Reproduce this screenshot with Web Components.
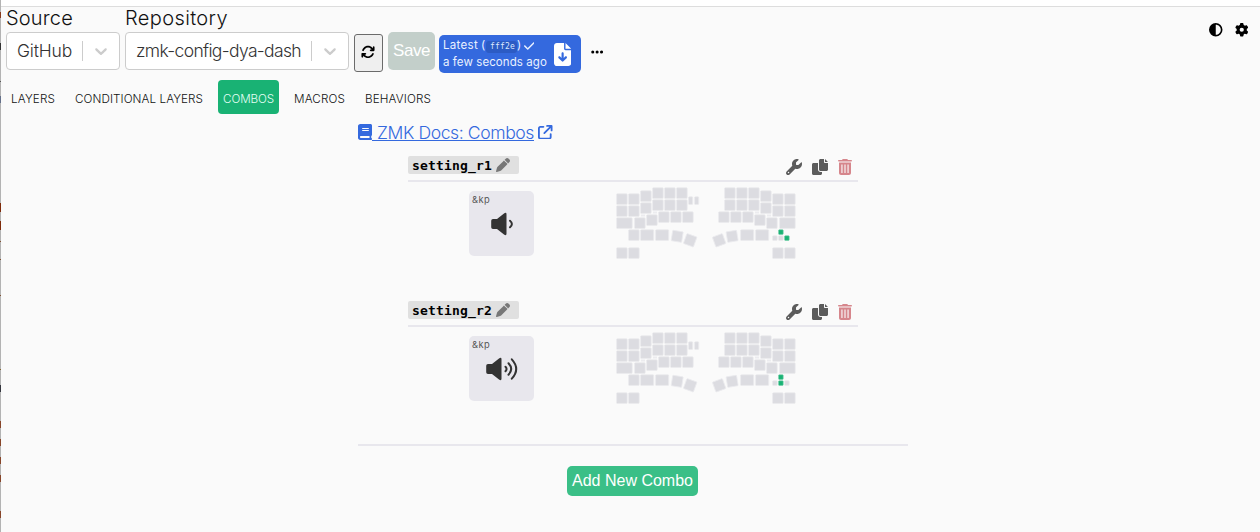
<!DOCTYPE html>
<html lang="en"><head><meta charset="utf-8"><title>Keymap Editor</title>
<style>
html,body{margin:0;height:100%;background:#fafafa}
body{font-family:Inter,"Liberation Sans",sans-serif;font-weight:300;overflow:hidden}
</style></head><body><keymap-app></keymap-app>
<script>
const ICONS={
rotate:[512,'M105.1 202.6c7.7-21.8 20.2-42.3 37.8-59.8c62.5-62.5 163.8-62.5 226.3 0L386.3 160H352c-17.7 0-32 14.3-32 32s14.3 32 32 32H463.9c17.7 0 32-14.3 32-32V80c0-17.7-14.3-32-32-32s-32 14.3-32 32v35.2L414.4 97.6c-87.5-87.5-229.3-87.5-316.8 0C73.2 122 55.6 150.7 44.8 181.4c-5.9 16.7 2.9 34.9 19.5 40.8s34.9-2.9 40.8-19.5zM39 289.3c-5 1.5-9.8 4.2-13.7 8.2c-4 4-6.7 8.8-8.1 14c-.3 1.2-.6 2.5-.8 3.8c-.3 1.7-.4 3.4-.4 5.1V432c0 17.7 14.3 32 32 32s32-14.3 32-32V396.9l17.6 17.5c87.5 87.4 229.3 87.4 316.7 0c24.4-24.4 42.1-53.1 52.9-83.7c5.9-16.7-2.9-34.9-19.5-40.8s-34.9 2.9-40.8 19.5c-7.7 21.8-20.2 42.3-37.8 59.8c-62.5 62.5-163.8 62.5-226.3 0l-.1-.1L125.6 352H160c17.7 0 32-14.3 32-32s-14.3-32-32-32H48.4c-1.6 0-3.2 .1-4.8 .3s-3.1 .5-4.6 1z'],
check:[448,'M438.6 105.4c12.5 12.5 12.5 32.8 0 45.3l-256 256c-12.5 12.5-32.8 12.5-45.3 0l-128-128c-12.5-12.5-12.5-32.8 0-45.3s32.8-12.5 45.3 0L160 338.7 393.4 105.4c12.5-12.5 32.8-12.5 45.3 0z'],
file:[384,'M64 0C28.7 0 0 28.7 0 64V448c0 35.3 28.7 64 64 64H320c35.3 0 64-28.7 64-64V160H256c-17.7 0-32-14.3-32-32V0H64zM256 0V128H384L256 0zM216 232V334.1l31-31c9.4-9.4 24.6-9.4 33.9 0s9.4 24.6 0 33.9l-72 72c-9.4 9.4-24.6 9.4-33.9 0l-72-72c-9.4-9.4-9.4-24.6 0-33.9s24.6-9.4 33.9 0l31 31V232c0-13.3 10.7-24 24-24s24 10.7 24 24z'],
contrast:[512,'M448 256c0-106-86-192-192-192V448c106 0 192-86 192-192zM0 256a256 256 0 1 1 512 0A256 256 0 1 1 0 256z'],
gear:[512,'M495.9 166.6c3.2 8.7 .5 18.4-6.4 24.6l-43.3 39.4c1.1 8.3 1.7 16.8 1.7 25.4s-.6 17.1-1.7 25.4l43.3 39.4c6.9 6.2 9.6 15.9 6.4 24.6c-4.4 11.9-9.7 23.3-15.8 34.3l-4.7 8.1c-6.6 11-14 21.4-22.1 31.2c-5.9 7.2-15.7 9.6-24.5 6.8l-55.7-17.7c-13.4 10.3-28.2 18.9-44 25.4l-12.5 57.1c-2 9.1-9 16.3-18.2 17.8c-13.8 2.3-28 3.5-42.5 3.5s-28.7-1.2-42.5-3.5c-9.2-1.5-16.2-8.7-18.2-17.8l-12.5-57.1c-15.8-6.5-30.6-15.1-44-25.4L83.1 425.9c-8.8 2.8-18.6 .3-24.5-6.8c-8.1-9.8-15.5-20.2-22.1-31.2l-4.7-8.1c-6.1-11-11.4-22.4-15.8-34.3c-3.2-8.7-.5-18.4 6.4-24.6l43.3-39.4C64.6 273.1 64 264.6 64 256s.6-17.1 1.7-25.4L22.4 191.2c-6.9-6.2-9.6-15.9-6.4-24.6c4.4-11.9 9.7-23.3 15.8-34.3l4.7-8.1c6.6-11 14-21.4 22.1-31.2c5.9-7.2 15.7-9.6 24.5-6.8l55.7 17.7c13.4-10.3 28.2-18.9 44-25.4l12.5-57.1c2-9.1 9-16.3 18.2-17.8C227.3 1.2 241.5 0 256 0s28.7 1.2 42.5 3.5c9.2 1.5 16.2 8.7 18.2 17.8l12.5 57.1c15.8 6.5 30.6 15.1 44 25.4l55.7-17.7c8.8-2.8 18.6-.3 24.5 6.8c8.1 9.8 15.5 20.2 22.1 31.2l4.7 8.1c6.1 11 11.4 22.4 15.8 34.3zM256 336a80 80 0 1 0 0-160 80 80 0 1 0 0 160z'],
book:[448,'M72 0H400C427 0 448 21 448 48V352C448 367 438 379 424 383V448C438 448 448 464 448 480S438 512 416 512H72C32 512 0 480 0 440V72C0 32 32 0 72 0zM96 384C78 384 64 398 64 416S78 448 96 448H368V384zM144 128C135 128 128 135 128 144S135 160 144 160H336C345 160 352 153 352 144S345 128 336 128zM144 192C135 192 128 199 128 208S135 224 144 224H336C345 224 352 217 352 208S345 192 336 192z'],
external:[512,'M320 0c-17.7 0-32 14.3-32 32s14.3 32 32 32h82.7L201.4 265.4c-12.5 12.5-12.5 32.8 0 45.3s32.8 12.5 45.3 0L448 109.3V192c0 17.7 14.3 32 32 32s32-14.3 32-32V32c0-17.7-14.3-32-32-32H320zM80 32C35.8 32 0 67.8 0 112V432c0 44.2 35.8 80 80 80H400c44.2 0 80-35.8 80-80V320c0-17.7-14.3-32-32-32s-32 14.3-32 32V432c0 8.8-7.2 16-16 16H80c-8.8 0-16-7.2-16-16V112c0-8.8 7.2-16 16-16H192c17.7 0 32-14.3 32-32s-14.3-32-32-32H80z'],
pencil:[512,'M410.3 231l11.3-11.3-33.9-33.9-62.1-62.1L291.7 89.8l-11.3 11.3-22.6 22.6L58.6 322.9c-10.4 10.4-18 23.3-22.2 37.4L1 480.7c-2.5 8.4-.2 17.5 6.1 23.7s15.3 8.5 23.7 6.1l120.3-35.4c14.1-4.2 27-11.8 37.4-22.2L387.7 253.7 410.3 231zM362.7 18.7L348.3 33.2 325.7 55.8 314.3 67.1l33.9 33.9 62.1 62.1 33.9 33.9 11.3-11.3 22.6-22.6 14.5-14.5c25-25 25-65.5 0-90.5L453.3 18.7c-25-25-65.5-25-90.5 0z'],
wrench:[512,'M352 320c88.4 0 160-71.6 160-160c0-15.3-2.2-30.1-6.2-44.2c-3.1-10.8-16.4-13.2-24.3-5.3l-76.8 76.8c-3 3-7.1 4.7-11.3 4.7H336c-8.8 0-16-7.2-16-16V118.6c0-4.2 1.7-8.3 4.7-11.3l76.8-76.8c7.9-7.9 5.4-21.2-5.3-24.3C382.1 2.2 367.3 0 352 0C263.6 0 192 71.6 192 160c0 19.1 3.4 37.5 9.5 54.5L19.9 396.1C7.2 408.8 0 426.1 0 444.1C0 481.6 30.4 512 67.9 512c18 0 35.3-7.2 48-19.9L297.5 310.5c17 6.2 35.4 9.5 54.5 9.5zM80 408a24 24 0 1 1 0 48 24 24 0 1 1 0-48z'],
copy:[512,'M272 0H384V96c0 18 14 32 32 32h96V336c0 26-22 48-48 48H272c-26 0-48-22-48-48V48c0-26 22-48 48-48zM416 0l96 96H416zM48 128H192V336c0 44 36 80 80 80h48v48c0 26-22 48-48 48H48c-26 0-48-22-48-48V176c0-26 22-48 48-48z'],
trash:[448,'M135.2 17.7C140.6 6.8 151.7 0 163.8 0H284.2c12.1 0 23.2 6.8 28.6 17.7L320 32h104c13 0 24 11 24 24s-11 24-24 24H24C11 80 0 69 0 56S11 32 24 32h104zM32 112H416V448c0 35.3-28.7 64-64 64H96c-35.3 0-64-28.7-64-64zM108 176V448h36V176zM206 176V448h36V176zM304 176V448h36V176z'],
chevron:[20,'M4.516 7.548c0.436-0.446 1.043-0.481 1.576 0l3.908 3.747 3.908-3.747c0.533-0.481 1.141-0.446 1.574 0 0.436 0.445 0.408 1.197 0 1.615-0.406 0.418-4.695 4.502-4.695 4.502-0.217 0.223-0.502 0.335-0.787 0.335s-0.57-0.112-0.789-0.335c0 0-4.287-4.084-4.695-4.502s-0.436-1.17 0-1.615z',20],
dots:[448,'M8 256a56 56 0 1 1 112 0A56 56 0 1 1 8 256zm160 0a56 56 0 1 1 112 0 56 56 0 1 1-112 0zm160 0a56 56 0 1 1 112 0 56 56 0 1 1-112 0z']
};
class Base extends HTMLElement{
  connectedCallback(){ if(!this.shadowRoot){this.attachShadow({mode:'open'}).innerHTML=this.render();} this.ready&&this.ready(); }
}
customElements.define('k-icon',class extends Base{
  render(){const [w,d,h=512]=ICONS[this.getAttribute('name')];const s=this.getAttribute('size');
  return `<style>:host{display:block;flex:none;height:${s}px}svg{display:block;height:${s}px;width:${s*w/h}px;fill:currentColor}</style><svg viewBox="0 0 ${w} ${h}"><path fill-rule="evenodd" d="${d}"/></svg>`}
});
/* A one-line label whose tracking is adjusted to fill its "w" width. */
customElements.define('k-text',class extends Base{
  render(){return `<style>:host{display:block;flex:none;white-space:pre;width:${this.getAttribute('w')}px}span{display:inline-block}</style><span><slot></slot></span>`}
  ready(){const s=this.shadowRoot.querySelector('span');
    const gap=+this.getAttribute('w')-s.getBoundingClientRect().width;
    s.style.letterSpacing=gap/this.textContent.length+'px';}
});
customElements.define('k-select',class extends Base{
  render(){return `<style>:host{display:block}.l{font-size:20px;line-height:22px;height:24px;color:#111}
  .c{box-sizing:border-box;height:38px;border:1px solid #ccc;border-radius:4px;background:#fff;display:flex;align-items:center;margin-top:1px;padding-left:10px;width:${this.getAttribute('box')}px;font-size:17.5px;line-height:20px;color:#333}
  i{width:1px;height:20px;background:#ccc;margin:0 8px 0 auto}k-icon{color:#ccc;margin-right:8px}</style>
  <div class="l"><k-text w="${this.getAttribute('lw')}">${this.getAttribute('label')}</k-text></div>
  <div class="c"><k-text w="${this.getAttribute('vw')}">${this.getAttribute('value')}</k-text><i></i><k-icon name="chevron" size="20"></k-icon></div>`}
});
customElements.define('k-header',class extends Base{
  render(){return `<style>:host{display:flex;align-items:flex-start;height:73px;padding:0 12px 0 5px;box-sizing:border-box}
  .s2{margin-left:5px}
  .r{box-sizing:border-box;width:29px;height:38px;margin:27px 0 0 5px;border:1px solid #6b6b6b;border-radius:3px;background:#efefef;display:flex;align-items:center;justify-content:center;color:#000;padding:0 1px 2px 0}
  .save{width:47px;height:38px;margin:25px 0 0 5px;border:0;border-radius:5px;background:#c3cfca;color:#fff;font:17px "Liberation Sans",sans-serif;padding:0 0 0 5px;text-align:left}
  .latest{box-sizing:border-box;width:142px;height:38px;margin:28px 0 0 4px;border-radius:5px;background:#3469de;color:#eaf1ff;display:flex;align-items:center;padding:0 10px 0 4px;justify-content:space-between;font-size:11.5px;font-weight:400}
  .row{display:flex;align-items:center;height:17px;line-height:19px}
  code{font:8px/12px "DejaVu Sans Mono",monospace;background:#2c5bc4;border-radius:3px;height:12px;margin:2px 0 0 0;display:flex;padding:0 2px 0 4px;color:#dce8ff}
  .dots{margin:38px 0 0 9.5px;color:#000}.top{margin:16px 0 0 auto;display:flex;gap:12px;color:#000}</style>
  <k-select label="Source" lw="67" value="GitHub" vw="55" box="114"></k-select>
  <k-select class="s2" label="Repository" lw="103" value="zmk-config-dya-dash" vw="165" box="224"></k-select>
  <button class="r"><k-icon name="rotate" size="14"></k-icon></button>
  <button class="save"><k-text w="37">Save</k-text></button>
  <div class="latest"><div><div class="row"><k-text w="35">Latest</k-text><k-text w="5" style="margin-left:3px">(</k-text><code><k-text w="25">fff2e</k-text></code><k-text w="5">)</k-text><k-icon name="check" size="12" style="margin-left:1.5px"></k-icon></div><div class="row"><k-text w="104">a few seconds ago</k-text></div></div><k-icon name="file" size="23" style="color:#fff"></k-icon></div>
  <k-icon class="dots" name="dots" size="14"></k-icon>
  <div class="top"><k-icon name="contrast" size="13.5"></k-icon><k-icon name="gear" size="13.5"></k-icon></div>`}
});
customElements.define('k-tabs',class extends Base{
  render(){const t=[['LAYERS',44],['CONDITIONAL LAYERS',128],['COMBOS',51],['MACROS',51],['BEHAVIORS',66]];
  return `<style>:host{display:flex;gap:10px;padding-left:5px;height:34px}div{padding:0 5px;border-radius:4px;font-size:11.7px;line-height:39px;color:#111;font-weight:350}.on{background:#19b274;color:#e4fff4}</style>`+t.map(([n,w])=>`<div class="${n=='COMBOS'?'on':''}"><k-text w="${w}">${n}</k-text></div>`).join('')}
});
customElements.define('k-board',class extends Base{
  render(){const keys=[];const k=(x,y,w=12,h=12,r=0,c='')=>keys.push([x,y,w,h,r,c]);
  for(const m of [0,1]){const q=(x,y,w=12,h=12,r=0)=>k(m?180-x-w:x,y,w,h,m?-r:r);
    const t=(x,y,w=12,r=0)=>q(x+(m?2.5:0),y,w,12,r);
    for(let row=0;row<2;row++){[0,12].forEach(x=>q(x,6+row*12));q(24,3+row*12);[36,48,60].forEach(x=>q(x,row*12));}
    q(0,30,17);q(18,30);q(30,27);[42,54,66].forEach(x=>q(x,24));
    if(!m)q(12,42);t(24,42,14.5);t(39,42,14.5);t(55.3,43.2,12,9);t(68.3,47.2,12,20);q(0,60);q(12,60);}
  k(72,9,5.5,9);k(78,9,5.5,9);
  const on=this.getAttribute('active').split(' ');
  [['up',162,42],['left',156,48],['mid',162,48],['right',168,48]].forEach(([n,x,y])=>k(x,y,6,6,0,on.includes(n)?'on':''));
  const slivers=[[25,27.5],[37,24.5],[139,24.5],[151,27.5]].map(([x,y])=>`<rect class="sl" x="${x}" y="${y}" width="4" height="2"/>`).join('');
  return `<style>:host{display:block}svg{display:block}rect{fill:#dcdce1;stroke:#ebebee;stroke-width:.8}.on{fill:#19b274;stroke:#6fcda6;stroke-width:.6}.sl{fill:#ececef;stroke:none}</style><svg width="180" height="74" viewBox="0 0 180 74">${slivers}${keys.map(([x,y,w,h,r,c])=>`<rect class="${c}" x="${x+.6}" y="${y+.8}" width="${w-1.4}" height="${h-1.4}" rx=".7" transform="rotate(${r} ${x+w/2} ${y+h/2})"/>`).join('')}</svg>`}
});
customElements.define('k-keycap',class extends Base{
  render(){const loud=this.hasAttribute('loud');
  return `<style>:host{display:flex;flex-direction:column;align-items:center;box-sizing:border-box;width:65px;height:65px;border-radius:5px;background:#e8e7ed;padding:3px 3px 0;color:#555;font-size:9.3px;line-height:12px;font-weight:400}k-text{align-self:flex-start}svg{margin-top:4px;display:block}</style><k-text w="18">&amp;kp</k-text>
  <svg width="32" height="28" viewBox="0 0 32 28" fill="none" stroke="#333" stroke-width="2" stroke-linecap="round"><g transform="translate(${loud?0:5} 0)"><path fill="#333" stroke="none" d="M2 9h4l7-5.6q2.5-1.6 2.5 .8v19.6q0 2.4-2.5 .8L6 19H2q-1.8 0-1.8-1.8v-6.4Q.2 9 2 9z"/>${loud?'<path d="M19.5 11.8q2.2 2.2 0 4.4M22.5 8.3q5.4 5.7 0 11.4M25.8 4.3q8.8 9.7 0 19.4"/>':'<path d="M19 10.7q3.8 3.3 0 6.6"/>'}</g></svg>`}
});
customElements.define('k-combo',class extends Base{
  render(){return `<style>:host{display:block;width:450px;height:145px}.h{display:flex;border-bottom:2px solid #e8e7ed;box-sizing:border-box;height:26px}
  .n{display:flex;align-items:center;width:111px;height:18px;box-sizing:border-box;padding-left:4px;background:#e0e0e0;border-radius:2px;font:bold 13px/18px "DejaVu Sans Mono",monospace;color:#000}.n k-text{margin-top:1px}.n k-icon{color:#777;margin-left:4px}
  .a{display:flex;margin:3px 6px 0 auto;color:#5c5c5c}.b{display:flex;padding:5px 0 0 61px}.b k-board{margin-left:82px}k-keycap{margin-top:4px}</style>
  <div class="h"><div class="n"><k-text w="80">${this.getAttribute('name')}</k-text><k-icon name="pencil" size="14"></k-icon></div><div class="a"><k-icon name="wrench" size="16"></k-icon><k-icon name="copy" size="16" style="margin-left:10px"></k-icon><k-icon name="trash" size="16" style="margin-left:10px;color:#d6868c"></k-icon></div></div>
  <div class="b"><k-keycap ${this.hasAttribute('loud')?'loud':''}></k-keycap><k-board active="${this.getAttribute('active')}"></k-board></div>`}
});
customElements.define('k-combos',class extends Base{
  render(){return `<style>:host{display:block;width:550px;margin:8px 0 0 357px}
  a{display:flex;align-items:center;height:20px;color:#3469de;font-size:17.6px;line-height:20px;text-decoration:none}.u{border-bottom:1px solid #3469de;height:16px;line-height:17px;margin-right:4px;padding-left:5px}
  .list{padding:14px 50px 0}.f{border-top:2px solid #e8e7ed;margin-top:-2px;padding-top:20px}
  button{display:block;margin:0 0 0 209px;width:131px;height:30px;padding:0 5px;border:0;border-radius:5px;background:#3abf87;color:#fff;font:16px "Liberation Sans",sans-serif;text-align:left}</style>
  <a><k-icon name="book" size="16"></k-icon><span class="u"><k-text w="157">ZMK Docs: Combos</k-text></span><k-icon name="external" size="14.5"></k-icon></a>
  <div class="list"><k-combo name="setting_r1" active="up right"></k-combo><k-combo name="setting_r2" active="up mid" loud></k-combo></div>
  <div class="f"><button><k-text w="121">Add New Combo</k-text></button></div>`}
});
customElements.define('keymap-app',class extends Base{
  render(){const marks=[[12,18,'#8a3b1c'],[43,50,'#333'],[81,82,'#555'],[96,103,'#64708a'],[203,212,'#7e2b0a'],[221,230,'#7e2b0a'],[241,242,'#805030'],[259,260,'#805030'],[295,296,'#805030'],[369,370,'#84652f'],[385,392,'#34363e'],[421,428,'#874529'],[439,446,'#874529'],[457,464,'#874529'],[475,482,'#874529'],[511,518,'#874529']];
  const stops=marks.map(([a,b,c])=>`linear-gradient(${c},${c}) 0 ${a}px/1px ${b-a}px no-repeat`).join(',');
  return `<style>:host{display:flex;height:532px;width:1260px}.edge{width:1px;flex:none;background:${stops},#b3b3b3}main{flex:1;border-top:1px solid #ddd;background:#fafafa}.p{flex:1;display:flex;flex-direction:column;background:#fff;padding-top:6px}</style><div class="edge"></div><div class="p"><main><k-header></k-header><k-tabs></k-tabs><k-combos></k-combos></main></div>`}
});
</script></body></html>
